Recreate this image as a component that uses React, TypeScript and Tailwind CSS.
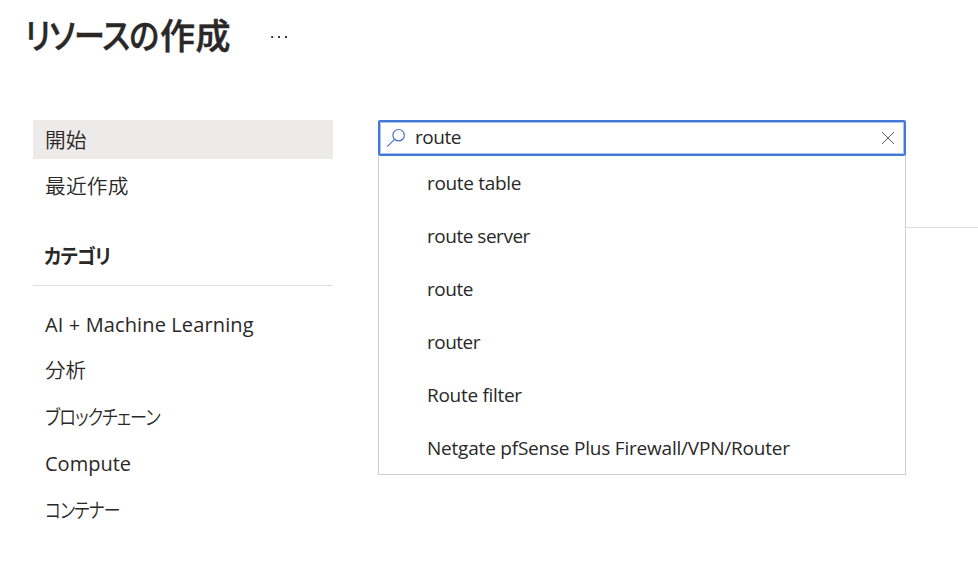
const results = [
  { text: 'route table', tracking: 'tracking-[-0.33px]' },
  { text: 'route server', tracking: 'tracking-[-0.48px]' },
  { text: 'route', tracking: 'tracking-[-0.45px]' },
  { text: 'router', tracking: 'tracking-[-0.5px]' },
  { text: 'Route filter', tracking: 'tracking-[-0.3px]' },
  { text: 'Netgate pfSense Plus Firewall/VPN/Router', tracking: 'tracking-[-0.21px]' },
];

const categories = [
  { text: 'AI + Machine Learning', style: 'text-[20px] tracking-[0.12px]' },
  { text: '分析', style: 'text-[20.5px] font-[350] -mt-px' },
  { text: 'ブロックチェーン', style: 'text-[20.5px] font-[350] tracking-[-1px] [font-feature-settings:"palt"] origin-left scale-x-[0.835] -mt-px' },
  { text: 'Compute', style: 'text-[20px]' },
  { text: 'コンテナー', style: 'text-[20.5px] font-[350] tracking-[-1px] [font-feature-settings:"palt"] origin-left scale-x-[0.82]' },
];

function SearchIcon() {
  return (
    <svg className="h-5 w-5 shrink-0" viewBox="0 0 20 20" fill="none" stroke="#4a72cc" strokeWidth="1.2">
      <circle cx="12.6" cy="7.2" r="5.7" />
      <path d="M8.5 11.3 1.2 18.6" />
    </svg>
  );
}

function ClearIcon() {
  return (
    <svg className="h-[14px] w-[14px] shrink-0" viewBox="0 0 14 14" stroke="#605e5c" strokeWidth="1">
      <path d="m1 1 12 12M13 1 1 13" />
    </svg>
  );
}

export default function App() {
  return (
    <main className="h-[565px] w-[978px] overflow-hidden whitespace-nowrap bg-white font-['Open_Sans','Noto_Sans_CJK_JP',sans-serif] text-[#292827]">
      <header className="flex h-[120px] pl-[25px]">
        <h1 className="flex h-[72px] w-[206px] text-[35px] leading-[72px] font-medium [-webkit-text-stroke:0.5px_#292827]">
          <span className="w-[135px] shrink-0 origin-left scale-x-[0.885] tracking-[-1px] [font-feature-settings:'palt']">リソースの</span>
          <span className="tracking-[0.5px]">作成</span>
        </h1>
        <svg className="ml-[40px] mt-[33px] h-[6px] w-[20px]" fill="#3b3a39">
          <rect x="0.2" y="3" width="2" height="2" />
          <rect x="7" y="3" width="2" height="2" />
          <rect x="14" y="3" width="2" height="2" />
        </svg>
      </header>
      <div className="flex">
        <aside className="ml-[33px] w-[300px] shrink-0">
          <div className="h-[39px] bg-[#edebe9] pl-3 text-[20.7px] leading-[40px] font-[350]">開始</div>
          <div className="h-[46px] pl-3 pt-2 text-[20.7px] leading-[38px] font-[350] tracking-[0.2px]">最近作成</div>
          <h2 className="h-[81px] border-b border-[#e1dfdd] pl-[11px] pt-7 text-[20.5px] leading-[46px] font-semibold">
            <span className="inline-block origin-left scale-x-[0.92] tracking-[-1px] [font-feature-settings:'palt']">カテゴリ</span>
          </h2>
          <nav className="pt-4">
            {categories.map((c) => (
              <div key={c.text} className="flex h-[46.3px] pl-3 leading-[46px]">
                <span className={c.style}>{c.text}</span>
              </div>
            ))}
          </nav>
        </aside>
        <section className="ml-[45px] w-[528px] shrink-0">
          <div className="flex h-9 items-center rounded-[2px] border-2 border-[#4478d6] pl-[6px] pr-[9px] ring-1 ring-inset ring-[#a9c1ee]">
            <SearchIcon />
            <div className="ml-[9px] flex-1 pb-[3px] text-[19px] leading-[30px] tracking-[-0.45px]">route</div>
            <ClearIcon />
          </div>
          <ul className="h-[319px] border border-t-0 border-[#d2d0ce] pl-12">
            {results.map((r) => (
              <li key={r.text} className="h-[53px] text-[19px] leading-[54px]">
                <span className={r.tracking}>{r.text}</span>
              </li>
            ))}
          </ul>
        </section>
        <div className="h-[108px] flex-1 border-b border-[#dfdde4]" />
      </div>
    </main>
  );
}
